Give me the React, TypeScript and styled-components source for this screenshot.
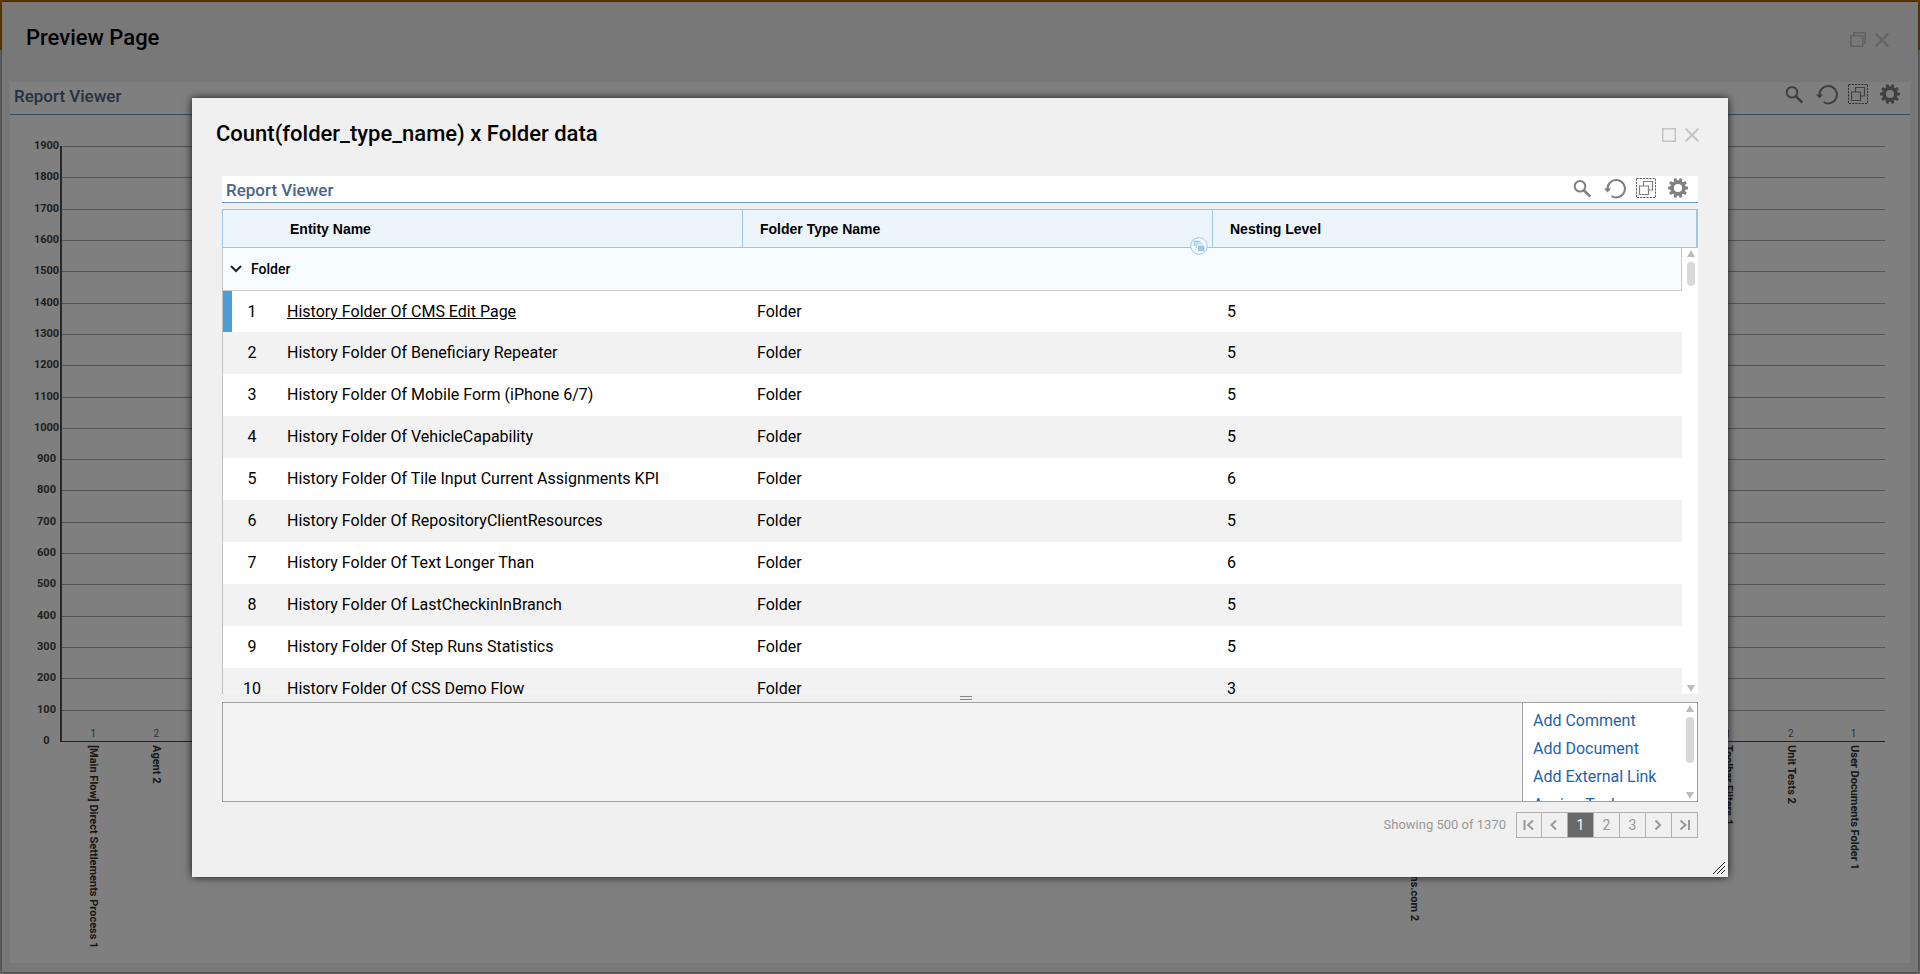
import React from 'react';
import styled, { createGlobalStyle, css } from 'styled-components';

const GlobalStyle = createGlobalStyle`
  * { box-sizing: border-box; }
  html, body, #root { height: 100%; }
  body { margin: 0; overflow: hidden; font-family: Roboto, "Liberation Sans", sans-serif; color: #000; background: #d8d8d8; }
  button { font: inherit; color: inherit; padding: 0; border: 0; background: none; cursor: pointer; }
  svg { display: block; }
`;

const Page = styled.div`
  position: relative;
  height: 100%;
  padding: 2px;
  background: linear-gradient(#d87400 50px, #d8d8d8 50px);
`;

const Dialog = styled.section`
  display: flex;
  flex-direction: column;
  background: #f0f0f0;
`;

const PageWindow = styled(Dialog)`
  height: 100%;
  padding: 0 8px 9px;
  box-shadow: 0 0 4px rgba(0, 0, 0, 0.6);
`;

const Overlay = styled.div`
  position: absolute;
  inset: 0;
  display: flex;
  align-items: flex-start;
  justify-content: center;
  padding-top: 98px;
  background: rgba(0, 0, 0, 0.5);
`;

const ReportDialog = styled(Dialog)`
  position: relative;
  width: 80%;
  height: 80vh;
  padding: 0 30px;
  box-shadow: 0 0 8px rgba(0, 0, 0, 0.8);
`;

const TitleBar = styled.header<{ $pull: number; $height: number }>`
  display: flex;
  flex: none;
  align-items: flex-start;
  justify-content: space-between;
  height: ${(p) => p.$height}px;
  margin-left: ${(p) => p.$pull}px;
`;

const Title = styled.h1`
  margin: 0;
  padding-top: 22px;
  font-size: 22px;
  line-height: 28px;
  font-weight: 500;
`;

const WindowControls = styled.div<{ $end: number }>`
  display: flex;
  gap: 9px;
  padding-top: 30px;
  margin-right: ${(p) => p.$end}px;
  color: #c4c4c4;
`;

const ViewerHeader = styled.header<{ $height: number }>`
  display: flex;
  flex: none;
  justify-content: space-between;
  height: ${(p) => p.$height}px;
  padding: 2px 10px 0 4px;
  border-bottom: 1px solid #6b96d0;
  background: #fff;
`;

const ViewerTitle = styled.h2`
  margin: 0;
  font-size: 17px;
  line-height: 25px;
  font-weight: 500;
  color: #476688;
`;

const Tools = styled.div`
  display: flex;
  gap: 12px;
  color: #808080;
  button { height: 20px; }
  svg { overflow: visible; }
`;

const ChartPanel = styled.div`
  flex: 1;
  min-height: 0;
  padding: 31px 25px 0 23px;
  background: #fff;
`;

const ChartRow = styled.div`
  display: flex;
`;

const Scale = styled.div`
  display: flex;
  flex-direction: column;
  justify-content: space-between;
  height: 607px;
  width: 27px;
  margin: -6px 0;
  font-size: 11px;
  line-height: 12px;
  font-weight: 700;
  text-align: center;
  color: #404040;
`;

const Plot = styled.div`
  display: grid;
  grid-template-columns: repeat(29, minmax(0, 1fr));
  flex: 1;
  height: 596px;
  border-left: 2px solid #505050;
  border-bottom: 1px solid #33475c;
  background: repeating-linear-gradient(#a8a8a8 0 1px, transparent 1px calc(595px / 19));
`;

const Category = styled.div`
  display: flex;
  flex-direction: column;
  align-items: center;
  padding-top: 582px;
`;

const Value = styled.span`
  flex: none;
  font-size: 10px;
  line-height: 12px;
  color: #606060;
`;

const CategoryName = styled.span`
  flex: none;
  padding-top: 5px;
  font-size: 11px;
  line-height: 14px;
  font-weight: 700;
  color: #303030;
  white-space: nowrap;
  writing-mode: vertical-rl;
`;

const TableArea = styled.div`
  position: relative;
  flex: 1;
  min-height: 0;
  margin-top: 6px;
  overflow: hidden;
`;

const Table = styled.table`
  width: 100%;
  table-layout: fixed;
  border-collapse: separate;
  border-spacing: 0;
  text-align: left;
`;

const NumberCol = styled.col` width: 59px; `;
const NameCol = styled.col` width: 462px; `;
const TypeCol = styled.col` width: 470px; `;
const GutterCol = styled.col` width: 16px; `;

const HeadCell = styled.th<{ $left?: number; $edge?: string }>`
  position: relative;
  height: 39px;
  padding: 0 0 0 ${(p) => p.$left ?? 17}px;
  border: solid #9cc8e8;
  border-width: ${(p) => p.$edge ?? '1px 1px 1px 0'};
  background: #ecf4fc;
  font-family: "Liberation Sans", Arial, sans-serif;
  font-size: 14px;
  line-height: 20px;
  font-weight: 700;
`;

const GroupBadge = styled.button`
  position: absolute;
  right: 4px;
  bottom: -8px;
  z-index: 1;
`;

const GroupCell = styled.td`
  height: 43px;
  padding: 0 0 0 7px;
  border: solid #c8c8c8;
  border-width: 0 1px 1px;
  background: #f7fcff;
`;

const GroupToggle = styled.button`
  display: flex;
  align-items: center;
  gap: 9px;
  font-size: 14px;
  line-height: 20px;
  font-weight: 500;
`;

const Row = styled.tr<{ $selected?: boolean }>`
  height: ${(p) => (p.$selected ? 41 : 42)}px;
  background: #fff;
  font-size: 16px;
  line-height: 20px;
  &:nth-child(odd) { background: #f2f2f2; }
`;

const Cell = styled.td`
  padding: 0 0 0 14px;
`;

const NumberCell = styled.td<{ $selected?: boolean }>`
  padding: 0;
  border-left: 1px solid #c0c0c0;
  text-align: center;
  ${(p) => p.$selected && css`box-shadow: inset 9px 0 #4d9ed8;`}
`;

const NameCell = styled.td`
  padding: 0 0 0 6px;
`;

const NameLink = styled.a`
  color: inherit;
  text-decoration: none;
  &[aria-current] { text-decoration: underline; }
`;

const Gutter = styled.td`
  padding: 0;
  background: #fff;
`;

const ScrollTrack = styled.div<{ $top: number }>`
  position: absolute;
  top: ${(p) => p.$top}px;
  right: 0;
  bottom: 0;
  display: flex;
  flex-direction: column;
  align-items: center;
  width: 14px;
  padding: 2px 0;
  svg { flex: none; }
`;

const Thumb = styled.div<{ $height: number }>`
  width: 8px;
  height: ${(p) => p.$height}px;
  margin: 5px 0 auto;
  border-radius: 4px;
  background: #d8d8d8;
`;

const Splitter = styled.div`
  flex: none;
  height: 8px;
  padding: 2px 0 0 50%;
`;

const Grip = styled.div`
  width: 12px;
  height: 4px;
  border: solid #85858c;
  border-width: 1px 0;
`;

const DetailPane = styled.section`
  display: flex;
  flex: none;
  height: 100px;
  border: 1px solid #a0a0a0;
  background: #f4f4f4;
`;

const Actions = styled.nav`
  position: relative;
  display: flex;
  flex-direction: column;
  width: 175px;
  margin-left: auto;
  padding: 4px 0 0 10px;
  border-left: 1px solid #a0a0a0;
  background: #fff;
  overflow: hidden;
`;

const ActionLink = styled.a`
  flex: none;
  font-size: 16px;
  line-height: 28px;
  color: #1f63a5;
  text-decoration: none;
  white-space: nowrap;
`;

const Footer = styled.footer`
  display: flex;
  flex: none;
  align-items: center;
  justify-content: flex-end;
  gap: 10px;
  height: 75px;
  padding-bottom: 29px;
  font-size: 13px;
  line-height: 20px;
  color: #999;
`;

const Pager = styled.nav`
  display: flex;
  border: 1px solid #b0b0b0;
`;

const PageButton = styled.button<{ $active?: boolean }>`
  display: flex;
  align-items: center;
  justify-content: center;
  width: 26px;
  height: 24px;
  border-right: 1px solid #b0b0b0;
  font-size: 14px;
  &:first-child { width: 25px; }
  &:last-child { width: 25px; border-right: 0; }
  ${(p) => p.$active && css`background: #696969; color: #fff;`}
`;

const ResizeHandle = styled.div`
  position: absolute;
  right: 3px;
  bottom: 3px;
`;

const CloseIcon = () => (
  <svg width="14" height="14" viewBox="0 0 14 14" stroke="currentColor" strokeWidth="2"><path d="M.7.7l12.6 12.6M13.3.7.7 13.3" /></svg>
);
const MaximizeIcon = () => (
  <svg width="14" height="14" viewBox="0 0 14 14" fill="none" stroke="currentColor" strokeWidth="1.5"><path d="M.75.75h12.5v12.5H.75z" /></svg>
);
const RestoreIcon = () => (
  <svg width="16" height="15" viewBox="0 0 16 15" fill="none" stroke="currentColor" strokeWidth="1.6"><path d="M.8 3.8h12v10.4H.8zM3.8 3.500V.8h11.400v10.400h-2.400" /></svg>
);
const SearchIcon = () => (
  <svg width="20" height="20" viewBox="0 0 20 20" fill="none" stroke="currentColor"><circle cx="8" cy="8.3" r="5.3" strokeWidth="2" /><path d="M11.8 12.2l6.5 6.4" strokeWidth="2.6" /></svg>
);
const ReloadIcon = () => (
  <svg width="20" height="20" viewBox="0 0 20 20" fill="none"><path d="M3.600 12A8.700 8.700 0 1 1 7.500 18" stroke="currentColor" strokeWidth="2" /><path d="M0 10.400h7.200l-3.600 4z" fill="currentColor" /></svg>
);
const GroupIcon = () => (
  <svg width="20" height="20" viewBox="0 0 20 20" fill="none" stroke="currentColor"><path d="M.5.5h19v19H.5z" strokeDasharray="2.2 1" stroke="#606060" /><path d="M3.5 8h9v8.500h-9zM7.500 7.500v-4h9v8.500h-3.500" strokeWidth="1.2" /></svg>
);
const teeth = Array.from({ length: 10 }, (_, i) => i * 36 + 18);
const GearIcon = () => (
  <svg width="20" height="20" viewBox="0 0 20 20" fill="currentColor">
    <circle cx="10" cy="10" r="5.900" fill="none" stroke="currentColor" strokeWidth="3.6" />
    {teeth.map((a) => <path key={a} d="M8.300 3 8.700 0h2.600l.4 3z" transform={`rotate(${a} 10 10)`} />)}
  </svg>
);
const Triangle = ({ down }: { down?: boolean }) => (
  <svg width="8" height="7" viewBox="0 0 8 7" fill="#bdbdbd"><path d={down ? 'M0 0h8L4 7z' : 'M0 7h8L4 0z'} /></svg>
);
const ChevronIcon = () => (
  <svg width="12" height="8" viewBox="0 0 12 8" fill="none" stroke="#222" strokeWidth="2"><path d="M1 1l5 5 5-5" /></svg>
);
const BadgeIcon = () => (
  <svg width="18" height="18" viewBox="0 0 18 18">
    <circle cx="9" cy="9" r="8.300" fill="#f4faff" stroke="#9cc8e8" />
    <path d="M4.500 9V4.500h6" fill="none" stroke="#9cc8e8" strokeWidth="1.600" />
    <path d="M6.500 11V6.500h6" fill="none" stroke="#b4d6ee" strokeWidth="1.600" />
    <path d="M8 8.500h6.500v5.500H8z" fill="#9cc8e8" />
  </svg>
);
const arrows = {
  first: 'M2.500 2v10M11 2.500 6 7l5 4.500',
  prev: 'M8 2.500 3.500 7 8 11.500',
  next: 'M3.500 2.500 8 7l-4.500 4.500',
  last: 'M11 2v10M2.500 2.500 7.500 7l-5 4.500',
};
const PagerIcon = ({ kind }: { kind: keyof typeof arrows }) => (
  <svg width="14" height="14" viewBox="0 0 14 14" fill="none" stroke="currentColor" strokeWidth="2"><path d={arrows[kind]} /></svg>
);
const ResizeIcon = () => (
  <svg width="12" height="12" viewBox="0 0 12 12" stroke="#222"><path d="M0 12 12 0M4 12l8-8M8 12l4-4" /></svg>
);

const ViewerBar = ({ height }: { height: number }) => (
  <ViewerHeader $height={height}>
    <ViewerTitle>Report Viewer</ViewerTitle>
    <Tools>
      <button aria-label="Search"><SearchIcon /></button>
      <button aria-label="Reload"><ReloadIcon /></button>
      <button aria-label="Group"><GroupIcon /></button>
      <button aria-label="Settings"><GearIcon /></button>
    </Tools>
  </ViewerHeader>
);

const ticks = Array.from({ length: 20 }, (_, i) => 1900 - i * 100);
const categories: Record<number, { name: string; value: number }> = {
  0: { name: '[Main Flow] Direct Settlements Process 1', value: 1 },
  1: { name: 'Agent 2', value: 2 },
  21: { name: 'helpdesk@examplesolutions.com 2', value: 2 },
  26: { name: 'Toolbar Filters 1', value: 1 },
  27: { name: 'Unit Tests 2', value: 2 },
  28: { name: 'User Documents Folder 1', value: 1 },
};

const rows: [string, number][] = [
  ['History Folder Of CMS Edit Page', 5],
  ['History Folder Of Beneficiary Repeater', 5],
  ['History Folder Of Mobile Form (iPhone 6/7)', 5],
  ['History Folder Of VehicleCapability', 5],
  ['History Folder Of Tile Input Current Assignments KPI', 6],
  ['History Folder Of RepositoryClientResources', 5],
  ['History Folder Of Text Longer Than', 6],
  ['History Folder Of LastCheckinInBranch', 5],
  ['History Folder Of Step Runs Statistics', 5],
  ['History Folder Of CSS Demo Flow', 3],
];

export default function App() {
  return (
    <Page>
      <GlobalStyle />
      <PageWindow>
        <TitleBar $pull={16} $height={80}>
          <Title>Preview Page</Title>
          <WindowControls $end={21}>
            <button aria-label="Restore"><RestoreIcon /></button>
            <button aria-label="Close page"><CloseIcon /></button>
          </WindowControls>
        </TitleBar>
        <ViewerBar height={33} />
        <ChartPanel>
          <ChartRow>
            <Scale>{ticks.map((t) => <span key={t}>{t}</span>)}</Scale>
            <Plot>
              {Array.from({ length: 29 }, (_, i) => (
                <Category key={i}>
                  {categories[i] && <Value>{categories[i].value}</Value>}
                  {categories[i] && <CategoryName>{categories[i].name}</CategoryName>}
                </Category>
              ))}
            </Plot>
          </ChartRow>
        </ChartPanel>
      </PageWindow>

      <Overlay>
        <ReportDialog role="dialog" aria-label="Count(folder_type_name) x Folder data">
          <TitleBar $pull={-6} $height={78}>
            <Title>Count(folder_type_name) x Folder data</Title>
            <WindowControls $end={-1}>
              <button aria-label="Maximize"><MaximizeIcon /></button>
              <button aria-label="Close"><CloseIcon /></button>
            </WindowControls>
          </TitleBar>
          <ViewerBar height={27} />
          <TableArea>
            <Table>
              <colgroup><NumberCol /><NameCol /><TypeCol /><col /><GutterCol /></colgroup>
              <thead>
                <tr>
                  <HeadCell $edge="1px 0 1px 1px" aria-label="Row" />
                  <HeadCell $left={9}>Entity Name</HeadCell>
                  <HeadCell>Folder Type Name<GroupBadge aria-label="Grouped"><BadgeIcon /></GroupBadge></HeadCell>
                  <HeadCell colSpan={2} $edge="1px 2px 1px 0">Nesting Level</HeadCell>
                </tr>
              </thead>
              <tbody>
                <tr>
                  <GroupCell colSpan={4}><GroupToggle><ChevronIcon />Folder</GroupToggle></GroupCell>
                  <Gutter />
                </tr>
                {rows.map(([name, level], i) => (
                  <Row key={name} $selected={i === 0}>
                    <NumberCell $selected={i === 0}>{i + 1}</NumberCell>
                    <NameCell><NameLink href="#" aria-current={i === 0 || undefined}>{name}</NameLink></NameCell>
                    <Cell>Folder</Cell>
                    <Cell>{level}</Cell>
                    <Gutter />
                  </Row>
                ))}
              </tbody>
            </Table>
            <ScrollTrack $top={39}><Triangle /><Thumb $height={24} /><Triangle down /></ScrollTrack>
          </TableArea>
          <Splitter><Grip /></Splitter>
          <DetailPane>
            <Actions>
              <ActionLink href="#">Add Comment</ActionLink>
              <ActionLink href="#">Add Document</ActionLink>
              <ActionLink href="#">Add External Link</ActionLink>
              <ActionLink href="#">Assign Task</ActionLink>
              <ScrollTrack $top={0}><Triangle /><Thumb $height={46} /><Triangle down /></ScrollTrack>
            </Actions>
          </DetailPane>
          <Footer>
            <span>Showing 500 of 1370</span>
            <Pager aria-label="Pages">
              <PageButton aria-label="First"><PagerIcon kind="first" /></PageButton>
              <PageButton aria-label="Previous"><PagerIcon kind="prev" /></PageButton>
              <PageButton $active>1</PageButton>
              <PageButton>2</PageButton>
              <PageButton>3</PageButton>
              <PageButton aria-label="Next"><PagerIcon kind="next" /></PageButton>
              <PageButton aria-label="Last"><PagerIcon kind="last" /></PageButton>
            </Pager>
          </Footer>
          <ResizeHandle><ResizeIcon /></ResizeHandle>
        </ReportDialog>
      </Overlay>
    </Page>
  );
}
